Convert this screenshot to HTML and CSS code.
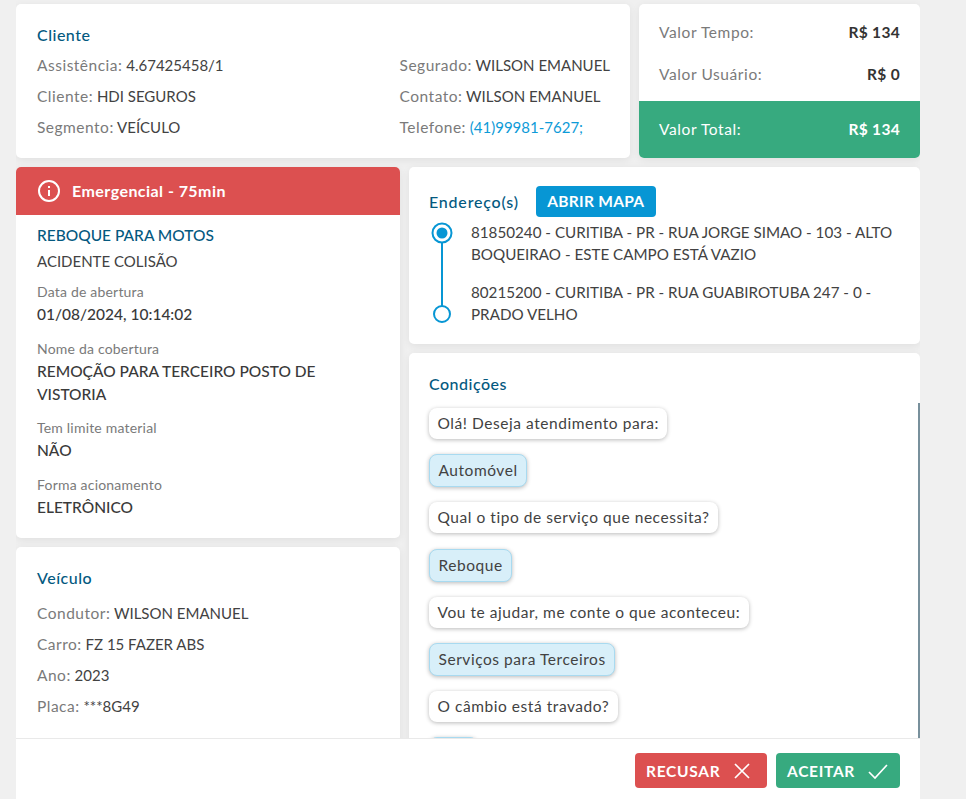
FILE: index.html
```html
<!DOCTYPE html>
<html lang="pt-BR">
<head>
<meta charset="utf-8">
<title>Serviço</title>
<link rel="stylesheet" href="styles.css">
</head>
<body>
<div class="page">
  <div class="row top">
    <section class="card client">
      <h2 class="title">Cliente</h2>
      <div class="client-cols">
        <div class="col-a">
          <p class="kv"><span class="k">Assistência:</span> 4.67425458/1</p>
          <p class="kv"><span class="k">Cliente:</span> HDI SEGUROS</p>
          <p class="kv"><span class="k">Segmento:</span> VEÍCULO</p>
        </div>
        <div class="col-b">
          <p class="kv"><span class="k">Segurado:</span> WILSON EMANUEL</p>
          <p class="kv"><span class="k">Contato:</span> WILSON EMANUEL</p>
          <p class="kv"><span class="k">Telefone:</span> <span class="link">(41)99981-7627;</span></p>
        </div>
      </div>
    </section>
    <section class="card values">
      <div class="value-lines">
        <div class="value-line"><span class="k">Valor Tempo:</span><b>R$ 134</b></div>
        <div class="value-line"><span class="k">Valor Usuário:</span><b>R$ 0</b></div>
      </div>
      <div class="value-total"><span>Valor Total:</span><b>R$ 134</b></div>
    </section>
  </div>
  <div class="row bottom">
    <div class="left">
      <section class="card service">
        <div class="alert">
          <svg class="alert-icon" width="24" height="24" viewBox="0 0 24 24" fill="none" stroke="#fff" stroke-width="2"><circle cx="12" cy="12" r="10"/><path d="M12 11v6M12 7v2"/></svg>
          <span class="alert-text">Emergencial - 75min</span>
        </div>
        <div class="service-body">
          <h2 class="title upper">REBOQUE PARA MOTOS</h2>
          <p class="sub">ACIDENTE COLISÃO</p>
          <p class="lbl">Data de abertura</p>
          <p class="val">01/08/2024, 10:14:02</p>
          <p class="lbl">Nome da cobertura</p>
          <p class="val">REMOÇÃO PARA TERCEIRO POSTO DE VISTORIA</p>
          <p class="lbl">Tem limite material</p>
          <p class="val">NÃO</p>
          <p class="lbl">Forma acionamento</p>
          <p class="val">ELETRÔNICO</p>
        </div>
      </section>
      <section class="card vehicle">
        <h2 class="title">Veículo</h2>
        <p class="kv"><span class="k">Condutor:</span> WILSON EMANUEL</p>
        <p class="kv"><span class="k">Carro:</span> FZ 15 FAZER ABS</p>
        <p class="kv"><span class="k">Ano:</span> 2023</p>
        <p class="kv"><span class="k">Placa:</span> ***8G49</p>
      </section>
    </div>
    <div class="right">
      <section class="card address">
        <div class="address-head">
          <h2 class="title">Endereço(s)</h2>
          <span class="map-btn">ABRIR MAPA</span>
        </div>
        <div class="route">
          <svg class="route-line" width="24" height="104" viewBox="0 0 24 104" fill="none" stroke="#0796d4" stroke-width="2"><circle cx="12" cy="12" r="9.5"/><circle cx="12" cy="12" r="5.5" fill="#0796d4" stroke="none"/><path d="M12 22v63"/><circle cx="12" cy="93" r="8" fill="#fff"/></svg>
          <div class="stops">
            <p>81850240 - CURITIBA - PR - RUA JORGE SIMAO - 103 - ALTO BOQUEIRAO - ESTE CAMPO ESTÁ VAZIO</p>
            <p>80215200 - CURITIBA - PR - RUA GUABIROTUBA 247 - 0 - PRADO VELHO</p>
          </div>
        </div>
      </section>
      <section class="card conditions">
        <h2 class="title">Condições</h2>
        <div class="chat">
          <span class="bubble">Olá! Deseja atendimento para:</span>
          <span class="bubble answer">Automóvel</span>
          <span class="bubble">Qual o tipo de serviço que necessita?</span>
          <span class="bubble answer">Reboque</span>
          <span class="bubble">Vou te ajudar, me conte o que aconteceu:</span>
          <span class="bubble answer">Serviços para Terceiros</span>
          <span class="bubble">O câmbio está travado?</span>
          <span class="bubble answer">Não</span>
        </div>
      </section>
    </div>
  </div>
  <footer class="actions">
    <span class="btn refuse">RECUSAR
      <svg width="20" height="20" viewBox="0 0 20 20" fill="none" stroke="#fff" stroke-width="1.7"><path d="M3 3l14 14M17 3L3 17"/></svg>
    </span>
    <span class="btn accept">ACEITAR
      <svg width="22" height="20" viewBox="0 0 22 20" fill="none" stroke="#fff" stroke-width="1.7"><path d="M2 11l6 6L20 4"/></svg>
    </span>
  </footer>
</div>
</body>
</html>
```
FILE: styles.css
```css
* { box-sizing: border-box; }
html, body { margin: 0; height: 100%; overflow: hidden; }
body {
  background: #f0f0f0;
  font-family: "Lato", "Noto Sans", sans-serif;
  font-size: 15px;
  color: #424242;
}
p, h2 { margin: 0; }
.page {
  position: relative;
  width: 904px;
  height: 799px;
  margin-left: 16px;
  padding-top: 4px;
  overflow: hidden;
}
.row { display: flex; gap: 9px; }
.top { height: 154px; margin-bottom: 9px; }
.card {
  background: #fff;
  border-radius: 5px;
  box-shadow: 0 2px 8px rgba(0,0,0,.07);
}
.title {
  font-size: 16px;
  font-weight: 500;
  line-height: 20px;
  letter-spacing: .5px;
  color: #04597f;
}
.k {
  color: #7a7a7a;
  font-size: 15.5px;
  letter-spacing: .5px;
}
.link { color: #0d9bd8; }
.kv { line-height: 31px; white-space: nowrap; }
.client { width: 614px; padding: 21px 20px 0 21px; }
.client-cols { display: flex; justify-content: space-between; margin-top: 5px; }
.values { width: 281px; display: flex; flex-direction: column; overflow: hidden; }
.value-lines { flex: 1; padding: 7px 20px 0; }
.value-line { display: flex; justify-content: space-between; line-height: 42px; font-size: 15.5px; }
.value-line b { color: #333; letter-spacing: .3px; }
.value-line .k { letter-spacing: .6px; }
.value-total {
  height: 57px;
  background: #37aa7f;
  color: #fff;
  font-size: 15.5px;
  display: flex;
  justify-content: space-between;
  align-items: center;
  padding: 0 20px 2px;
}
.value-total span { letter-spacing: .6px; }
.value-total b { letter-spacing: .3px; }
.left { width: 384px; display: flex; flex-direction: column; gap: 9px; }
.right { width: 511px; display: flex; flex-direction: column; gap: 9px; }
.service { height: 371px; overflow: hidden; }
.alert {
  height: 48px;
  background: #dc5050;
  color: #fff;
  font-size: 16px;
  font-weight: 700;
  letter-spacing: .45px;
  display: flex;
  align-items: center;
  gap: 11px;
  padding-left: 21px;
}
.alert-text { margin-bottom: 2px; }
.service-body { padding: 10px 50px 0 21px; }
.service-body .upper { font-size: 15.5px; letter-spacing: 0; }
.sub { line-height: 32px; }
.lbl {
  font-size: 14px;
  letter-spacing: .2px;
  color: #7a7a7a;
  line-height: 20px;
  margin-top: 12.5px;
}
.sub + .lbl { margin-top: 5px; }
.val { font-size: 15.5px; font-weight: 500; line-height: 23px; margin-top: 1px; color: #3a3a3a; }
.vehicle { height: 240px; padding: 21px 21px 0; }
.vehicle .title { margin-bottom: 10px; }
.address { height: 177px; padding: 19px 20px 0; }
.address-head { display: flex; align-items: center; gap: 17px; height: 31px; }
.address-head .title { letter-spacing: .8px; }
.map-btn {
  background: #0796d4;
  color: #fff;
  font-weight: 700;
  font-size: 15.5px;
  letter-spacing: .3px;
  width: 120px;
  text-align: center;
  height: 31px;
  line-height: 31px;
  border-radius: 4px;
}
.route { display: flex; gap: 17px; margin-top: 4px; margin-left: 1px; }
.route-line { flex: none; }
.stops p { font-size: 15.2px; line-height: 22px; margin-bottom: 16px; }
.conditions { height: 440px; padding: 21px 0 0 20px; position: relative; }
.chat {
  margin-top: 9px;
  height: 350px;
  border-right: 2px solid #78909c;
  display: flex;
  flex-direction: column;
  align-items: flex-start;
  gap: 15.2px;
  padding-top: 5px;
}
.bubble {
  flex: none;
  height: 31px;
  line-height: 31px;
  padding: 0 8.5px;
  font-size: 15.5px;
  letter-spacing: .55px;
  background: #fff;
  border-radius: 8px;
  box-shadow: 0 1px 4px rgba(0,0,0,.28);
}
.answer {
  background: #d8eff9;
  border: 1px solid #a8daf0;
  line-height: 30px;
  height: 33px;
}
.actions {
  position: absolute;
  left: 0;
  right: 0;
  bottom: 0;
  height: 61px;
  background: #fff;
  border-top: 1px solid #e9e9e9;
  display: flex;
  justify-content: flex-end;
  align-items: flex-start;
  gap: 9px;
  padding: 14px 20px 0 0;
}
.btn {
  height: 35px;
  display: flex;
  align-items: center;
  gap: 12px;
  color: #fff;
  font-size: 15.5px;
  font-weight: 700;
  letter-spacing: .7px;
  border-radius: 4px;
  padding: 0 11px;
}
.refuse { background: #dc5050; width: 132px; }
.accept { background: #37aa7f; width: 124px; }
```
